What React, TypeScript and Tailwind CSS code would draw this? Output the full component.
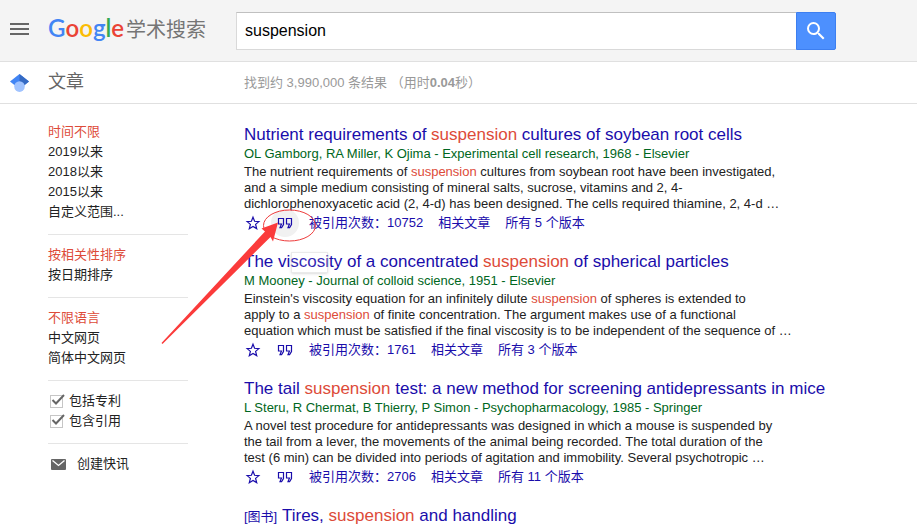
import type { ReactNode } from 'react';

const LINK = 'text-[#1a0dab] hover:underline';

function Hl({ children }: { children: ReactNode }) {
  return <span className="text-[#dd4b39]">{children}</span>;
}

function StarIcon() {
  return (
    <svg width="16" height="16" viewBox="0 0 16 16" fill="none" stroke="currentColor" strokeWidth="1.2" aria-hidden="true">
      <path d="M8 2.2l1.600 4.100 4.300.300-3.300 2.800 1.100 4.300L8 11.400l-3.700 2.300 1.100-4.300-3.300-2.800 4.300-.300z" />
    </svg>
  );
}

function QuoteIcon() {
  return (
    <svg width="16" height="12" viewBox="0 0 16 12" fill="none" stroke="currentColor" strokeWidth="1.2" aria-hidden="true">
      <path d="M1.5 1.5h5v6L4.6 10.6H3L4.5 7H1.500z" />
      <path d="M9.5 1.5h5v6l-1.900 3.100H11L12.500 7h-3z" />
    </svg>
  );
}

type Paper = {
  title: ReactNode;
  source: string;
  snippet: ReactNode;
  cited: string;
  versions: string;
  hovered?: boolean;
};

const papers: Paper[] = [
  {
    title: <>Nutrient requirements of <Hl>suspension</Hl> cultures of soybean root cells</>,
    source: 'OL Gamborg, RA Miller, K Ojima - Experimental cell research, 1968 - Elsevier',
    snippet: (
      <>
        The nutrient requirements of <Hl>suspension</Hl> cultures from soybean root have been investigated,<br />
        and a simple medium consisting of mineral salts, sucrose, vitamins and 2, 4-<br />
        dichlorophenoxyacetic acid (2, 4-d) has been designed. The cells required thiamine, 2, 4-d …
      </>
    ),
    cited: '10752',
    versions: '5',
    hovered: true,
  },
  {
    title: <>The viscosity of a concentrated <Hl>suspension</Hl> of spherical particles</>,
    source: 'M Mooney - Journal of colloid science, 1951 - Elsevier',
    snippet: (
      <>
        Einstein's viscosity equation for an infinitely dilute <Hl>suspension</Hl> of spheres is extended to<br />
        apply to a <Hl>suspension</Hl> of finite concentration. The argument makes use of a functional<br />
        equation which must be satisfied if the final viscosity is to be independent of the sequence of …
      </>
    ),
    cited: '1761',
    versions: '3',
  },
  {
    title: <>The tail <Hl>suspension</Hl> test: a new method for screening antidepressants in mice</>,
    source: 'L Steru, R Chermat, B Thierry, P Simon - Psychopharmacology, 1985 - Springer',
    snippet: (
      <>
        A novel test procedure for antidepressants was designed in which a mouse is suspended by<br />
        the tail from a lever, the movements of the animal being recorded. The total duration of the<br />
        test (6 min) can be divided into periods of agitation and immobility. Several psychotropic …
      </>
    ),
    cited: '2706',
    versions: '11',
  },
];

function Result({ paper }: { paper: Paper }) {
  return (
    <article className="mb-[19px]">
      <h3 className="text-[17px] leading-5">
        <a href="#paper" className={LINK}>{paper.title}</a>
      </h3>
      <p className="leading-[18px] text-[#006621]">{paper.source}</p>
      <p className="mt-px mb-px leading-4 text-[#222]">{paper.snippet}</p>
      <div className="flex h-5 items-center text-[#1a0dab]">
        <button type="button" aria-label="保存" className="ml-px flex w-8 items-center">
          <StarIcon />
        </button>
        <button type="button" aria-label="引用" className="relative flex h-4 w-8 items-center">
          {paper.hovered && <span className="absolute -left-[6px] -top-[6px] size-7 rounded-full bg-[#f1f1f1]" />}
          <span className="relative"><QuoteIcon /></span>
        </button>
        <div className="flex gap-[15px]">
          <a href="#cited" className={LINK}>被引用次数：{paper.cited}</a>
          <a href="#related" className={LINK}>相关文章</a>
          <a href="#versions" className={LINK}>所有 {paper.versions} 个版本</a>
        </div>
      </div>
    </article>
  );
}

function FilterGroup({ items }: { items: string[] }) {
  return (
    <ul className="mb-[10px] border-b border-[#e5e5e5] pb-3 leading-5">
      {items.map((item, i) => (
        <li key={item}>
          <a href="#filter" className={i === 0 ? 'text-[#dd4b39]' : 'text-[#222]'}>{item}</a>
        </li>
      ))}
    </ul>
  );
}

function Check({ label }: { label: string }) {
  return (
    <label className="relative flex h-5 items-center gap-[6px] pl-[2px]">
      <input type="checkbox" defaultChecked className="size-[13px] appearance-none border border-[#c6c6c6] bg-white" />
      <svg className="pointer-events-none absolute left-[3px] top-[2px]" width="14" height="13" viewBox="0 0 14 13" fill="none" stroke="#666" strokeWidth="2" aria-hidden="true">
        <path d="M1.5 7L5 10.5 13 2" />
      </svg>
      {label}
    </label>
  );
}

export default function App() {
  return (
    <div className="relative h-screen overflow-hidden bg-white font-['Liberation_Sans','Noto_Sans_CJK_SC',sans-serif] text-[13px] text-[#222]">
      <header className="flex h-[62px] items-center border-b border-[#e0e0e0] bg-[#f4f4f4]">
        <button type="button" aria-label="菜单" className="ml-[10px] mr-[19px] flex w-[19px] flex-col gap-[3px] pb-1">
          <span className="h-[2px] w-full bg-[#666]" />
          <span className="h-[2px] w-full bg-[#666]" />
          <span className="h-[2px] w-full bg-[#666]" />
        </button>
        <a href="#home" className="flex w-[188px] shrink-0 items-baseline gap-[2px] whitespace-nowrap pb-1">
          <span className="flex font-['Lato',sans-serif] text-[24px] font-semibold leading-8">
            <span className="text-[#4285f4]">G</span>
            <span className="text-[#ea4335]">o</span>
            <span className="text-[#fbbc05]">o</span>
            <span className="text-[#4285f4]">g</span>
            <span className="text-[#34a853]">l</span>
            <span className="text-[#ea4335]">e</span>
          </span>
          <span className="text-[20px] leading-8 text-[#757575]">学术搜索</span>
        </a>
        <form className="flex h-[38px] min-w-0 max-w-[600px] grow" onSubmit={(e) => e.preventDefault()}>
          <input
            aria-label="搜索"
            defaultValue="suspension"
            className="min-w-0 grow border border-r-0 border-[#d9d9d9] border-t-[#c0c0c0] bg-white px-2 text-[16px] text-black outline-none"
          />
          <button type="submit" aria-label="搜索" className="flex w-10 items-center justify-center rounded-r-[2px] border border-[#3d7ff0] bg-[#4d90fe]">
            <svg width="24" height="24" viewBox="0 0 24 24" fill="#fff" aria-hidden="true">
              <path d="M15.5 14h-.79l-.28-.27A6.471 6.471 0 0 0 16 9.5 6.5 6.5 0 1 0 9.5 16c1.61 0 3.09-.59 4.23-1.57l.27.28v.79l5 4.99L20.49 19l-4.99-5zm-6 0C7.01 14 5 11.99 5 9.5S7.01 5 9.5 5 14 7.01 14 9.5 11.99 14 9.5 14z" />
            </svg>
          </button>
        </form>
      </header>

      <div className="flex h-[42px] items-center border-b border-[#e0e0e0]">
        <svg className="ml-[10px] mr-[19px]" width="19" height="18" viewBox="0 0 19 18" aria-hidden="true">
          <path d="M9.5 0L0 7.6l5 4h9l5-4z" fill="#4285f4" />
          <path d="M9.5 0L19 7.6l-5 4L9.5 8z" fill="#356ac3" />
          <circle cx="9.5" cy="12.6" r="5.3" fill="#a0c3ff" />
        </svg>
        <h1 className="w-[196px] text-[18px] text-[#666]">文章</h1>
        <p className="text-[#999]">找到约 3,990,000 条结果 （用时<b>0.04</b>秒）</p>
      </div>

      <div className="flex pt-[18px]">
        <nav className="ml-12 mr-14 w-[140px] shrink-0">
          <FilterGroup items={['时间不限', '2019以来', '2018以来', '2015以来', '自定义范围...']} />
          <FilterGroup items={['按相关性排序', '按日期排序']} />
          <FilterGroup items={['不限语言', '中文网页', '简体中文网页']} />
          <div className="mb-[10px] border-b border-[#e5e5e5] pb-3">
            <Check label="包括专利" />
            <Check label="包含引用" />
          </div>
          <a href="#alert" className="flex h-5 items-center gap-[11px] pl-[3px]">
            <svg width="15" height="11" viewBox="0 0 15 11" aria-hidden="true">
              <rect width="15" height="11" rx="1" fill="#666" />
              <path d="M1.5 1.5l6 5 6-5" fill="none" stroke="#fff" strokeWidth="1.3" />
            </svg>
            创建快讯
          </a>
        </nav>
        <main className="min-w-0 grow whitespace-nowrap pt-[3px]">
          {papers.map((paper) => <Result key={paper.cited} paper={paper} />)}
          <h3 className="text-[17px] leading-5">
            <span className="text-[13px] text-[#1a0dab]">[图书]</span>{' '}
            <a href="#book" className={LINK}>Tires, <Hl>suspension</Hl> and handling</a>
          </h3>
        </main>
      </div>

      <div className="absolute left-[291px] top-[252px] h-[21px] w-[37px] border border-[#bbb]/30 bg-white/10 shadow-sm" />
      <svg className="pointer-events-none absolute left-0 top-0" width="340" height="360" fill="none" aria-hidden="true">
        <ellipse cx="289.5" cy="225.5" rx="26" ry="15.5" stroke="#ee3b3b" />
        <path d="M278 222.500L261.500 228.500l3.500 3L161.500 343l1 1L270.500 237l2.500 4.500z" fill="#fb3b3b" />
      </svg>
    </div>
  );
}
